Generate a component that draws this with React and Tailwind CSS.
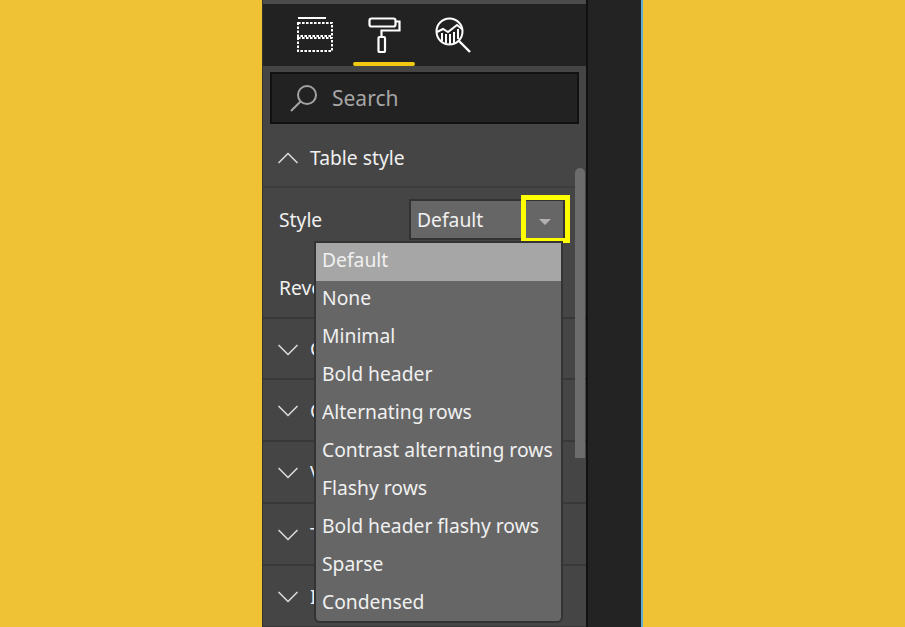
import React from "react";
import { ChevronDown, ChevronUp } from "lucide-react";

const options = [
  "Default",
  "None",
  "Minimal",
  "Bold header",
  "Alternating rows",
  "Contrast alternating rows",
  "Flashy rows",
  "Bold header flashy rows",
  "Sparse",
  "Condensed",
];

const sections = [
  { label: "Grid", h: "h-[61px]" },
  { label: "Column headers", h: "h-[62px]" },
  { label: "Values", h: "h-[62px]" },
  { label: "Total", h: "h-[62px]" },
  { label: "Image size", h: "h-[62px]" },
];

const FieldsIcon = () => (
  <svg width="36" height="35" viewBox="0 0 36 35" fill="none" stroke="white" strokeWidth="2">
    <path d="M1 1h28" />
    <rect x="1" y="6" width="34" height="13" strokeDasharray="2.6 1.4" />
    <rect x="1" y="21" width="34" height="13" strokeDasharray="2.6 1.4" />
  </svg>
);

const RollerIcon = () => (
  <svg width="33" height="36" viewBox="0 0 33 36" fill="none" stroke="white" strokeWidth="2.2">
    <rect x="1.5" y="1.5" width="26" height="8" rx="2" />
    <path d="M28 4.5h3.5v9H13.5v6.5" />
    <rect x="10.5" y="20" width="6.5" height="15" rx="1" />
  </svg>
);

const AnalyticsIcon = () => (
  <svg width="36" height="36" viewBox="0 0 36 36" fill="none" stroke="white" strokeWidth="2">
    <circle cx="14.5" cy="14.5" r="13" />
    <path d="M24 24l11 11" strokeWidth="2.4" />
    <path d="M2 15l6-3 5 3 9-7 5 4" />
    <path d="M7 16v8M11 17v9M15 17v10M19 15v11M23 12v10" />
  </svg>
);

const SearchIcon = () => (
  <svg width="28" height="28" viewBox="0 0 28 28" fill="none" stroke="#a3a3a3" strokeWidth="2">
    <circle cx="17" cy="11" r="9" />
    <path d="M10.5 17.5L1 27" strokeWidth="2.2" />
  </svg>
);

export default function App() {
  return (
    <div className="flex h-[627px] w-[905px] overflow-hidden bg-[#efc235] font-['Noto_Sans',sans-serif] text-[19.3px] text-[#f0f0f0]">
      <div className="w-[262px] shrink-0" />
      <div className="flex w-[381px] shrink-0 border-r-2 border-[#5fb0d0]">
        <div className="relative w-[324px] shrink-0 overflow-hidden border-l border-[#333333] bg-[#454545]">
          <div className="h-[4px] bg-[#4c4c4c]" />
          <div className="flex h-[62px] items-start bg-[#222222] pl-[34px] pt-[13px]">
            <FieldsIcon />
            <div className="ml-[20px] flex w-[62px] flex-col items-center">
              <RollerIcon />
              <div className="mt-[9px] h-[4px] w-[62px] rounded-sm bg-[#f2c811]" />
            </div>
            <div className="ml-[20px]">
              <AnalyticsIcon />
            </div>
          </div>
          <div className="px-[7px] pt-[6px]">
            <div className="flex h-[52px] w-[309px] items-center gap-[14px] border-2 border-[#111111] bg-[#222222] pl-[18px] text-[21px] text-[#a6a6a6]">
              <SearchIcon />
              <span className="pt-[2px]">Search</span>
            </div>
          </div>
          <div className="flex h-[64px] items-center border-b-2 border-[#3c3c3c] pl-[7px] pt-[6px]">
            <ChevronUp size={36} strokeWidth={1.1} className="text-[#d8d8d8]" />
            <span className="ml-[4px]">Table style</span>
          </div>
          <div className="flex h-[131px] flex-col border-b-2 border-[#383838] pl-[16px]">
            <div className="mt-[11px] flex h-[41px] items-center">
              <span className="w-[130px] pt-[2px]">Style</span>
              <div className="flex h-[41px] w-[156px] items-center border-2 border-[#333333] bg-[#666666] pl-[6px] pt-[2px]">
                Default
              </div>
            </div>
            <div className="mt-[34px] whitespace-nowrap">Revert to default</div>
          </div>
          {sections.map((s, i) => (
            <div key={i} className={`flex ${s.h} items-center whitespace-nowrap border-b-2 border-[#383838] pl-[7px] pt-[2px]`}>
              <ChevronDown size={36} strokeWidth={1.1} className="text-[#d8d8d8]" />
              <span className="ml-[4px]">{s.label}</span>
            </div>
          ))}
          <div className="absolute left-[312px] top-[168px] h-[290px] w-[10px] rounded-t-md bg-[#6c6c6c]" />
          <div className="absolute left-[146px] top-[200px] h-[41px] w-[156px]">
            <div className="absolute right-[14px] top-[19px] h-0 w-0 border-x-[6px] border-t-[6px] border-x-transparent border-t-[#b5b0b0]" />
          </div>
          <div className="absolute left-[258px] top-[195px] h-[48px] w-[49px] border-[5px] border-[#ffff00]" />
          <div className="absolute left-[51px] top-[241px] h-[382px] w-[249px] rounded-b-md border-2 border-[#333333] bg-[#666666]">
            {options.map((o, i) => (
              <div
                key={o}
                className={`flex h-[38px] items-center whitespace-nowrap pb-[3px] pl-[6px] ${i === 0 ? "bg-[#a6a6a6]" : ""}`}
              >
                {o}
              </div>
            ))}
          </div>
        </div>
        <div className="flex-1 border-l-2 border-[#111111] bg-[#232323]" />
      </div>
      <div className="flex-1" />
    </div>
  );
}
